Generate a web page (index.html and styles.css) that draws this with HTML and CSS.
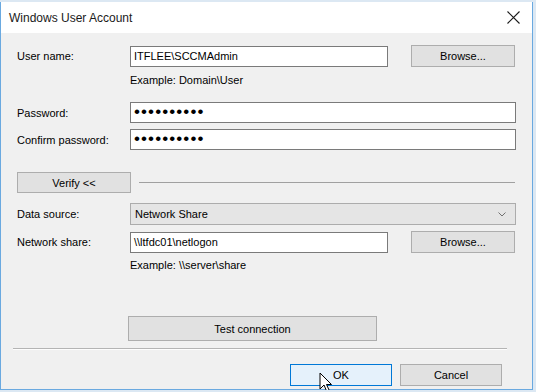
FILE: index.html
```html
<!DOCTYPE html>
<html lang="en">

<head>
  <meta charset="UTF-8">
  <meta name="viewport" content="width=device-width, initial-scale=1.0">
  <title>Windows User Account</title>

  <link rel="stylesheet" href="styles.css">

</head>

<body>

  <div class="window">
    <div class="titlebar">
      <span class="title">Windows User Account</span>
      <svg class="close" width="13" height="13" viewBox="0 0 13 13">
        <path d="M0.5 0.5 L12.5 12.5 M12.5 0.5 L0.5 12.5" stroke="#1a1a1a" stroke-width="1.1" fill="none"/>
      </svg>
    </div>

    <div class="content">
      <div class="row row-user">
        <span class="label">User name:</span>
        <div class="textbox short">ITFLEE\SCCMAdmin</div>
        <div class="btn browse">Browse...</div>
      </div>
      <div class="hint hint-user">Example: Domain\User</div>

      <div class="row row-pass">
        <span class="label">Password:</span>
        <div class="textbox wide dots">••••••••••</div>
      </div>
      <div class="row row-confirm">
        <span class="label">Confirm password:</span>
        <div class="textbox wide dots">••••••••••</div>
      </div>

      <div class="row row-verify">
        <div class="btn verify">Verify &lt;&lt;</div>
        <div class="rule"></div>
      </div>

      <div class="row row-source">
        <span class="label">Data source:</span>
        <div class="combo">
          <span>Network Share</span>
          <svg width="8" height="5" viewBox="0 0 8 5">
            <path d="M0.5 0.5 L4 4 L7.5 0.5" stroke="#707070" stroke-width="1" fill="none"/>
          </svg>
        </div>
      </div>

      <div class="row row-share">
        <span class="label">Network share:</span>
        <div class="textbox short">\\ltfdc01\netlogon</div>
        <div class="btn browse">Browse...</div>
      </div>
      <div class="hint hint-share">Example: \\server\share</div>

      <div class="btn test">Test connection</div>

      <div class="separator"></div>

      <div class="footer">
        <div class="btn ok">OK</div>
        <div class="btn cancel">Cancel</div>
      </div>
    </div>

    <svg class="cursor" width="14" height="22" viewBox="0 0 14 22">
      <path d="M1 1 L1 17 L5 13 L8 20 L10.5 19 L7.5 12.5 L12.5 12.5 Z" fill="#fff" stroke="#000" stroke-width="1" stroke-linejoin="round"/>
    </svg>
  </div>

</body>

</html>
```

FILE: styles.css
```css
body {
  margin: 0;
  background: #dce8f3;
  font-family: "Liberation Sans", Arial, sans-serif;
  font-size: 11px;
  color: #000;
  overflow: hidden;
}

.window {
  position: relative;
  width: 531px;
  height: 387px;
  margin-top: 2px;
  background: #f0f0f0;
  border: 1px solid #6aa9e0;
  border-top: none;
}

.titlebar {
  height: 31px;
  background: #fff;
  display: flex;
  align-items: center;
  justify-content: space-between;
  padding: 0 6px 0 8px;
}

.title {
  font-size: 12px;
  color: #1a1a1a;
  margin-top: 1px;
}

.close {
  margin-right: 6px;
}

.content {
  padding: 0 16px;
}

.row {
  display: flex;
  align-items: center;
  height: 22px;
}

.label {
  width: 113px;
  flex-shrink: 0;
}

.textbox {
  box-sizing: border-box;
  height: 21px;
  background: #fff;
  border: 1px solid #7a7a7a;
  padding: 0 3px;
  line-height: 19px;
  white-space: nowrap;
}

.textbox.short {
  width: 258px;
}

.textbox.wide {
  width: 386px;
}

.dots {
  font-size: 17px;
  letter-spacing: 1.1px;
  line-height: 18px;
}

.btn {
  box-sizing: border-box;
  height: 22px;
  background: #e1e1e1;
  border: 1px solid #adadad;
  display: flex;
  align-items: center;
  justify-content: center;
}

.browse {
  width: 104px;
  margin-left: 23px;
}

.hint {
  height: 12px;
  line-height: 12px;
  margin-left: 113px;
}

.row-user {
  margin-top: 12px;
}

.hint-user {
  margin-top: 7px;
}

.row-pass {
  margin-top: 16px;
  height: 21px;
}

.row-confirm {
  margin-top: 6px;
  height: 21px;
}

.row-verify {
  margin-top: 22px;
  height: 21px;
}

.verify {
  width: 114px;
  height: 21px;
}

.rule {
  flex: 1;
  margin: 0 1px 0 8px;
  border-top: 1px solid #a0a0a0;
}

.row-source {
  margin-top: 10px;
}

.combo {
  box-sizing: border-box;
  width: 386px;
  height: 22px;
  background: #e5e5e5;
  border: 1px solid #acacac;
  display: flex;
  align-items: center;
  justify-content: space-between;
  padding: 0 9px 0 4px;
}

.row-share {
  margin-top: 6px;
}

.hint-share {
  margin-top: 6px;
}

.test {
  width: 249px;
  height: 25px;
  margin: 45px 0 0 111px;
}

.separator {
  width: 494px;
  margin: 7px 0 0 -4px;
  border-top: 1px solid #b4b4b4;
  border-bottom: 1px solid #fdfdfd;
}

.footer {
  display: flex;
  justify-content: flex-end;
  gap: 8px;
  margin: 14px 14px 0 0;
}

.ok,
.cancel {
  width: 102px;
}

.ok {
  background: #e5f1fb;
  border-color: #0078d7;
}

.cursor {
  position: absolute;
  left: 318px;
  top: 370px;
}
```
